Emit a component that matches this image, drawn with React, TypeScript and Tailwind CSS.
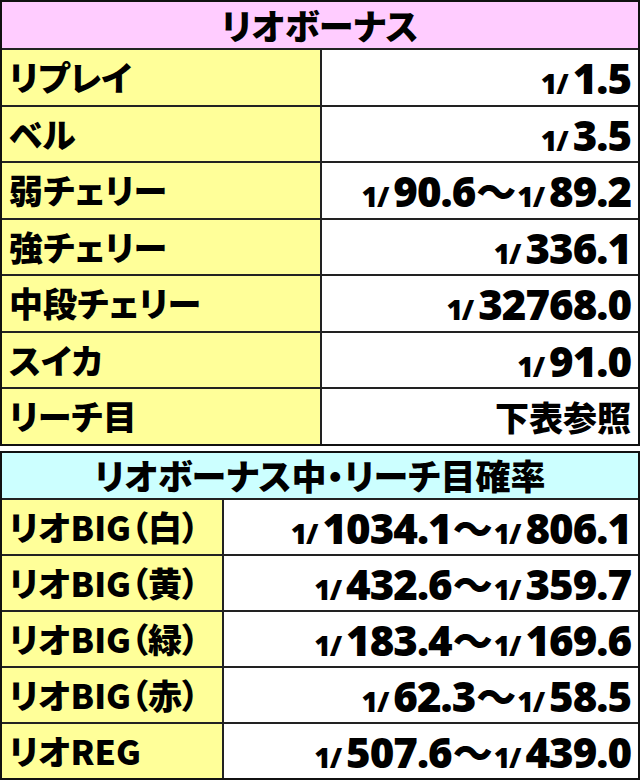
import React from 'react';

const jp = "font-['Noto_Sans_CJK_JP','Noto_Sans',sans-serif] font-black [font-feature-settings:'palt']";
const num = "font-['Open_Sans','Noto_Sans',sans-serif] font-extrabold";

type Part = { den: string };

interface Row {
  label: string;
  value: Part[] | string;
}

const bonusRows: Row[] = [
  { label: 'リプレイ', value: [{ den: '1.5' }] },
  { label: 'ベル', value: [{ den: '3.5' }] },
  { label: '弱チェリー', value: [{ den: '90.6' }, { den: '89.2' }] },
  { label: '強チェリー', value: [{ den: '336.1' }] },
  { label: '中段チェリー', value: [{ den: '32768.0' }] },
  { label: 'スイカ', value: [{ den: '91.0' }] },
  { label: 'リーチ目', value: '下表参照' },
];

const reachRows: Row[] = [
  { label: 'リオBIG（白）', value: [{ den: '1034.1' }, { den: '806.1' }] },
  { label: 'リオBIG（黄）', value: [{ den: '432.6' }, { den: '359.7' }] },
  { label: 'リオBIG（緑）', value: [{ den: '183.4' }, { den: '169.6' }] },
  { label: 'リオBIG（赤）', value: [{ den: '62.3' }, { den: '58.5' }] },
  { label: 'リオREG', value: [{ den: '507.6' }, { den: '439.0' }] },
];

function Prob({ value }: { value: Part[] | string }) {
  if (typeof value === 'string') {
    return <span className={`${jp} text-[34px] leading-none text-black`}>{value}</span>;
  }
  return (
    <span className="flex items-baseline text-black">
      {value.map((p, i) => (
        <React.Fragment key={i}>
          {i > 0 && (
            <span className={`${jp} text-[40px] leading-none mx-[1px]`}>〜</span>
          )}
          <span className={`${num} text-[28px] leading-none tracking-[-1px] mr-[5px]`}>1/</span>
          <span className={`${num} text-[42px] leading-none tracking-[-1px]`}>{p.den}</span>
        </React.Fragment>
      ))}
    </span>
  );
}

function Table({
  title,
  titleBg,
  rows,
  labelWidth,
  headerH,
  rowH,
}: {
  title: string;
  titleBg: string;
  rows: Row[];
  labelWidth: string;
  headerH: string;
  rowH: string;
}) {
  return (
    <div className="border-2 border-[#111] w-full">
      <div className={`${titleBg} ${headerH} flex items-center justify-center pb-[2px]`}>
        <span className={`${jp} text-[35px] leading-none text-black`}>{title}</span>
      </div>
      {rows.map((r) => (
        <div key={r.label} className={`${rowH} flex border-t-2 border-[#222]`}>
          <div className={`${labelWidth} bg-[#ffff99] border-r-2 border-[#222] flex items-center pl-[7px] shrink-0`}>
            <span className={`${jp} text-[34px] leading-none text-black whitespace-nowrap`}>{r.label}</span>
          </div>
          <div className="flex-1 bg-white flex items-center justify-end pr-[7px] pt-[2px]">
            <Prob value={r.value} />
          </div>
        </div>
      ))}
    </div>
  );
}

export default function App() {
  return (
    <div className="w-[640px] h-[784px] bg-white">
      <Table
        title="リオボーナス"
        titleBg="bg-[#ffccff]"
        rows={bonusRows}
        labelWidth="w-[320px]"
        headerH="h-[46px]"
        rowH="h-[56.5px]"
      />
      <div className="mt-[5px]">
        <Table
          title="リオボーナス中・リーチ目確率"
          titleBg="bg-[#ccffff]"
          rows={reachRows}
          labelWidth="w-[222px]"
          headerH="h-[45px]"
          rowH="h-[56px]"
        />
      </div>
    </div>
  );
}
